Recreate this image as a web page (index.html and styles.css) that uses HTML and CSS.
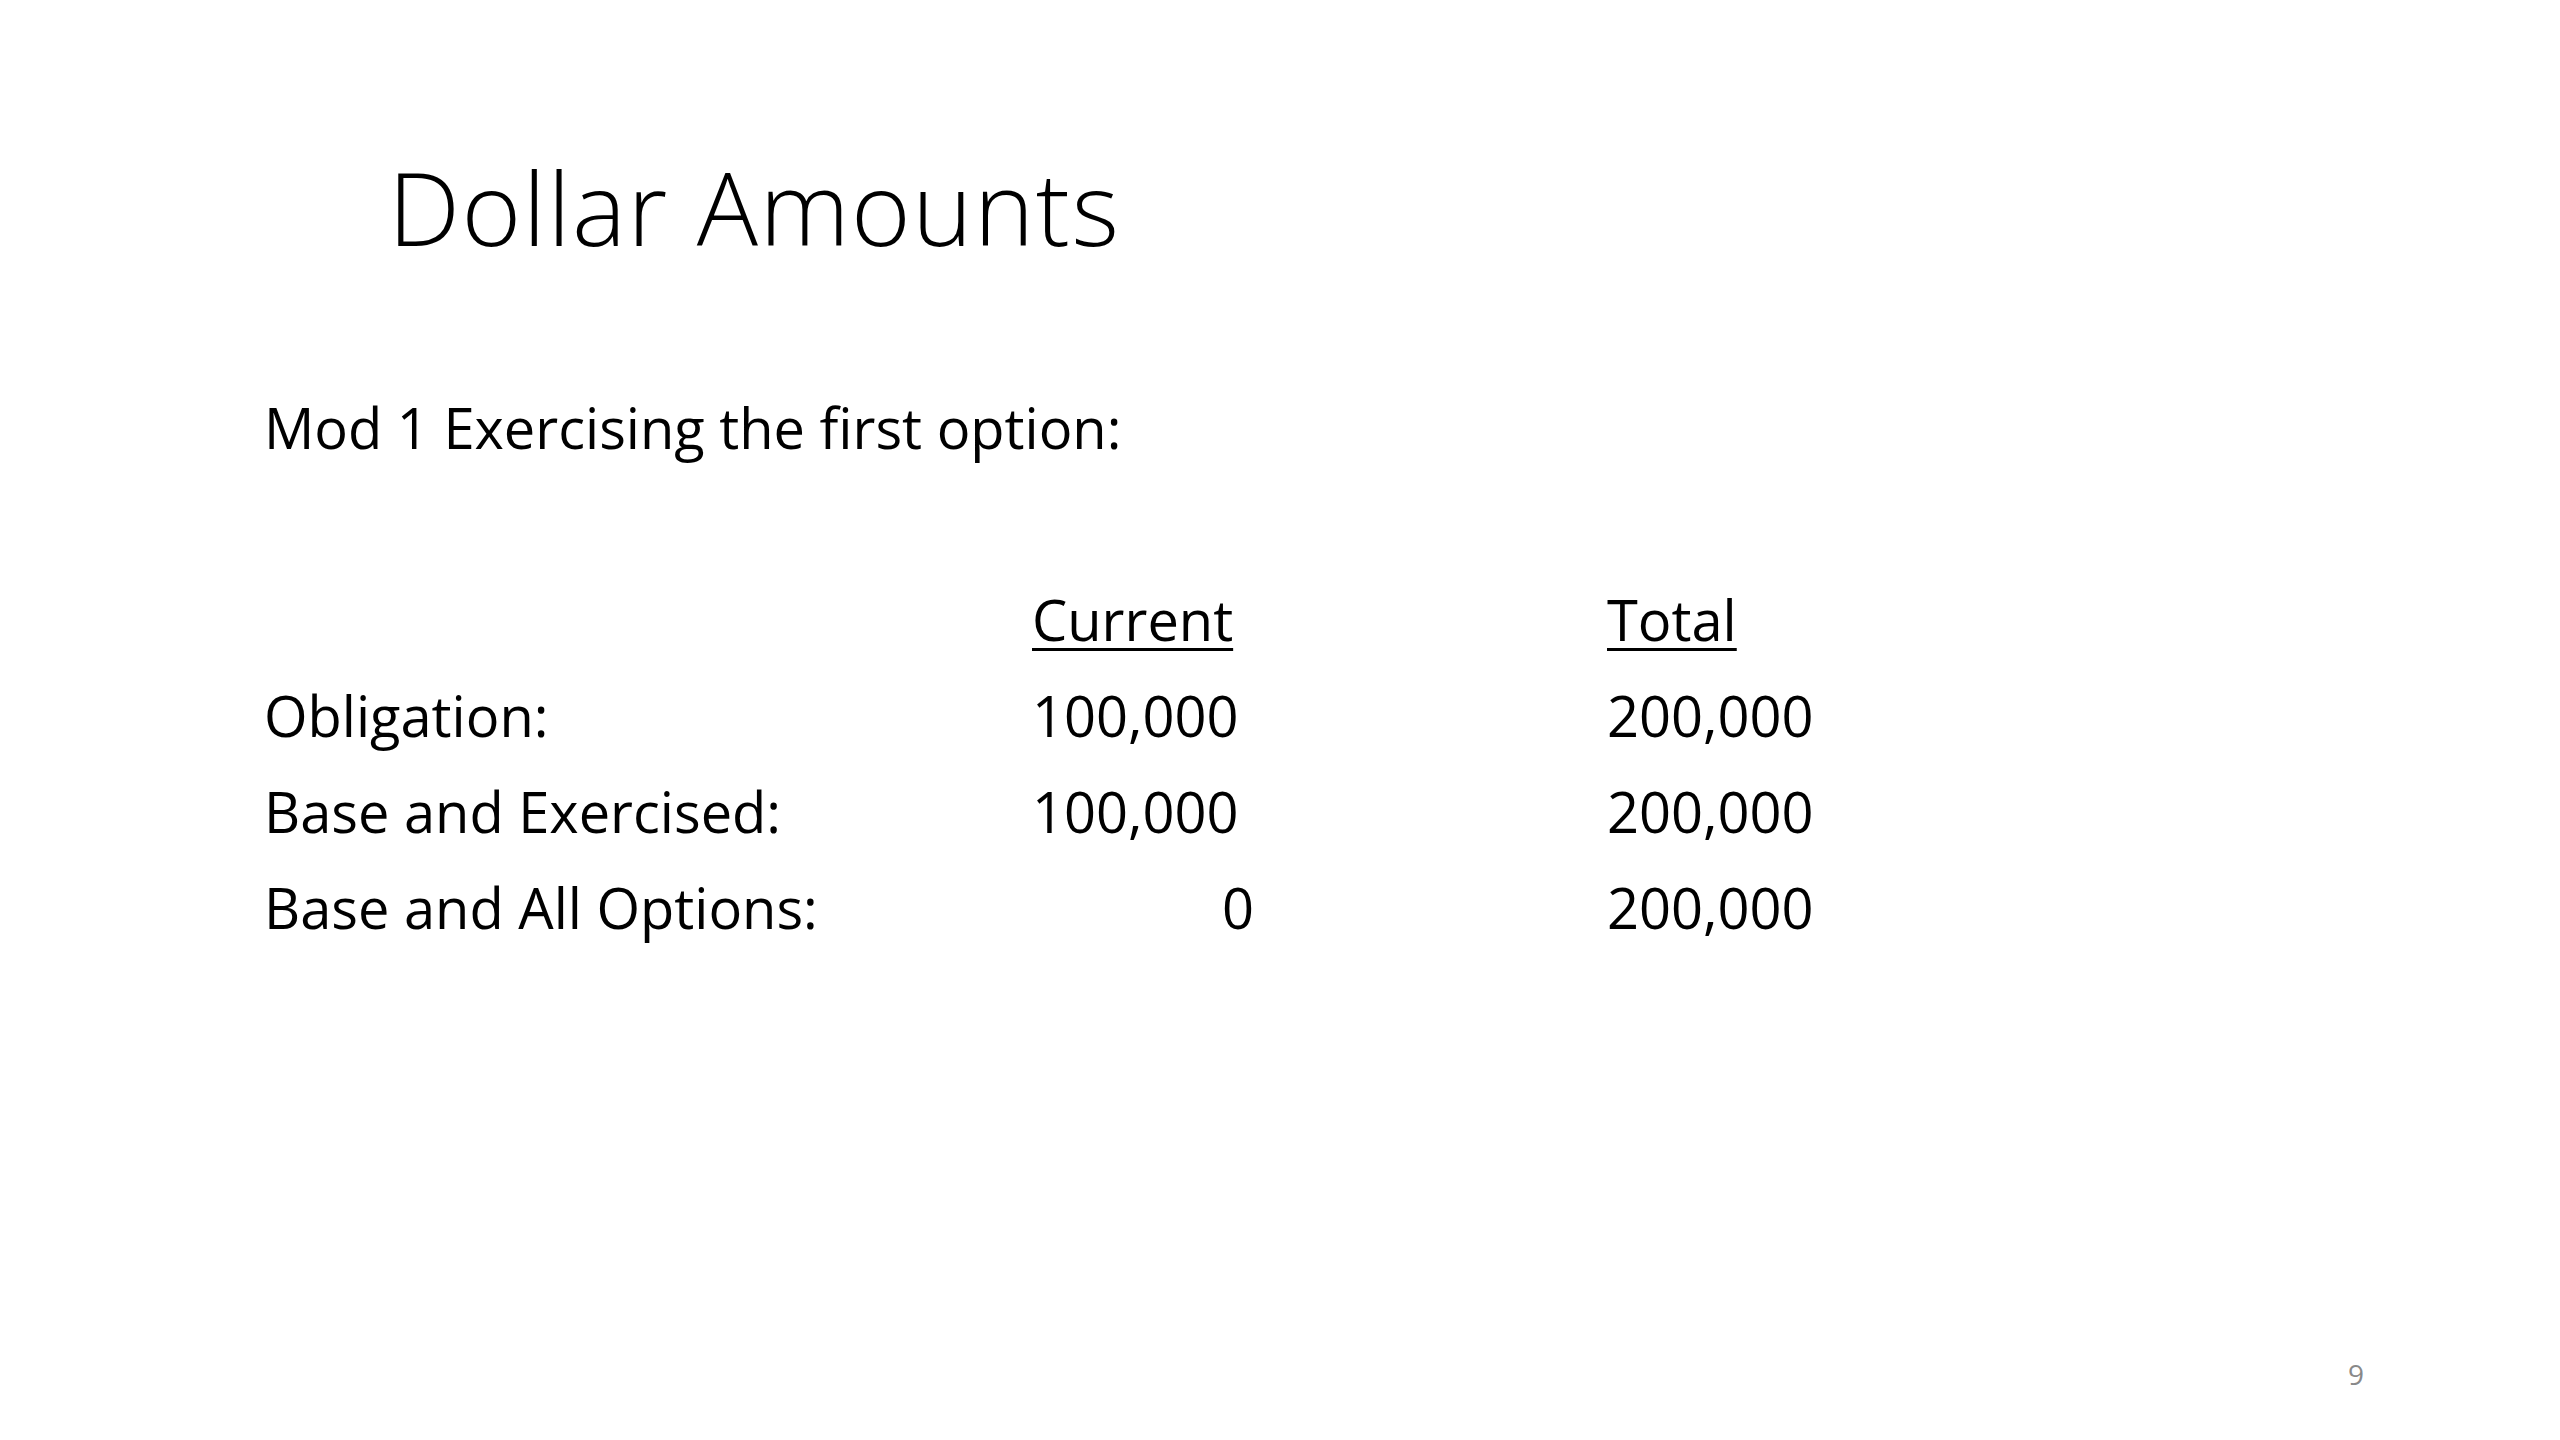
FILE: index.html
```html
<!DOCTYPE html>
<html lang="en">
<head>
<meta charset="utf-8">
<title>Dollar Amounts</title>
<link rel="stylesheet" href="styles.css">
</head>
<body>
<div class="slide">
  <h1 class="title">Dollar Amounts</h1>
  <div class="content">
    <div class="line">Mod 1 Exercising the first option:</div>
    <div class="line blank">&nbsp;</div>
    <div class="row">
      <span class="cell"></span>
      <span class="cell"><span class="head">Current</span></span>
      <span class="cell"><span class="head">Total</span></span>
    </div>
    <div class="row">
      <span class="cell">Obligation:</span>
      <span class="cell">100,000</span>
      <span class="cell">200,000</span>
    </div>
    <div class="row">
      <span class="cell">Base and Exercised:</span>
      <span class="cell">100,000</span>
      <span class="cell">200,000</span>
    </div>
    <div class="row">
      <span class="cell">Base and All Options:</span>
      <span class="cell zero">0</span>
      <span class="cell">200,000</span>
    </div>
  </div>
  <div class="footer"><span class="slide-num">9</span></div>
</div>
</body>
</html>
```

FILE: styles.css
```css
html, body {
  margin: 0;
  padding: 0;
  background: #ffffff;
}

.slide {
  width: 2560px;
  height: 1440px;
  display: flex;
  flex-direction: column;
  background: #ffffff;
  color: #000000;
  font-family: "Open Sans", "Liberation Sans", sans-serif;
  box-sizing: border-box;
}

.title {
  margin: 147px 0 0 0;
  padding-left: 388px;
  font-size: 102px;
  font-weight: 300;
  letter-spacing: 1.5px;
  line-height: 120px;
  height: 120px;
  color: #000000;
}

.content {
  margin-top: 112px;
  padding-left: 264px;
  font-size: 56px;
  line-height: 96px;
}

.line {
  height: 96px;
  white-space: nowrap;
}

.row {
  display: grid;
  grid-template-columns: 768px 575px auto;
  height: 96px;
  white-space: nowrap;
}

.head {
  text-decoration: underline;
  text-decoration-thickness: 3px;
  text-underline-offset: 7px;
}

.zero {
  padding-left: 190px;
}

.footer {
  margin-top: auto;
  padding: 0 196px 46px 0;
  text-align: right;
  font-size: 28px;
  line-height: 40px;
}

.slide-num {
  color: #898989;
}
```
